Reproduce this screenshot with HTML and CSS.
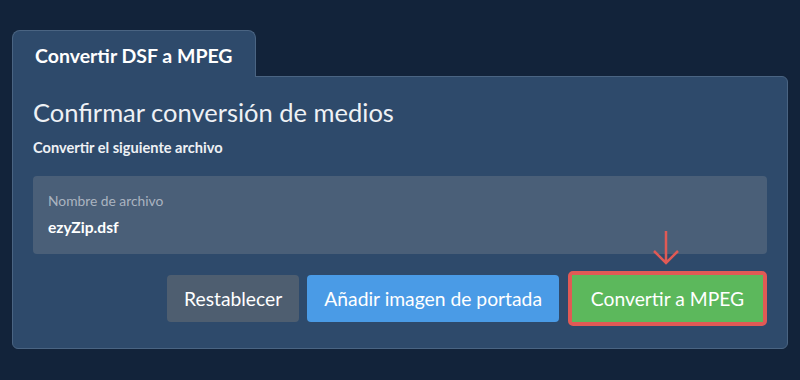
FILE: index.html
```html
<!DOCTYPE html>
<html>
<head>
    <meta charset="UTF-8">
    <title>Convertir DSF a MPEG</title>
    <link rel="stylesheet" href="styles.css">
</head>
<body>
    <div class="wrap">
        <div class="tabs">
            <div class="tab">Convertir DSF a MPEG</div>
        </div>

        <div class="panel">
            <h2>Confirmar conversión de medios</h2>
            <div class="subtitle">Convertir el siguiente archivo</div>

            <div class="file-box">
                <div class="file-label">Nombre de archivo</div>
                <div class="file-name">ezyZip.dsf</div>
            </div>

            <div class="actions">
                <button class="btn btn-reset">Restablecer</button>
                <button class="btn btn-cover">Añadir imagen de portada</button>
                <div class="highlight">
                    <svg class="arrow" viewBox="0 0 34 36" fill="none" xmlns="http://www.w3.org/2000/svg">
                        <path d="M17 1V33M5 21L17 33L29 21" stroke="#e05a55" stroke-width="2.5"/>
                    </svg>
                    <button class="btn btn-convert">Convertir a MPEG</button>
                </div>
            </div>
        </div>
    </div>
</body>
</html>
```

FILE: styles.css
```css
:root {
    --page: #12233a;
    --panel: #2e4a6b;
    --border: #4a6482;
    --field: #4a5f78;
    --text: #eef1f5;
    --muted: #aab4c0;
    --grey: #4e5e70;
    --blue: #4a9be6;
    --green: #5cb85c;
    --red: #e05a55;
}

body {
    margin: 0;
    background: var(--page);
    font-family: Lato, 'Open Sans', sans-serif;
    color: var(--text);
    width: 800px;
    height: 380px;
    overflow: hidden;
}

.wrap {
    padding: 30px 12px 0 12px;
}

.tabs {
    display: flex;
}

.tab {
    background: var(--panel);
    border: 1px solid var(--border);
    border-bottom: none;
    border-radius: 8px 8px 0 0;
    padding: 0 22px;
    width: 198px;
    height: 46px;
    line-height: 50px;
    font-size: 19.5px;
    font-weight: 700;
    color: #ffffff;
    position: relative;
    z-index: 1;
    margin-bottom: -1px;
}

.panel {
    background: var(--panel);
    border: 1px solid var(--border);
    border-radius: 0 6px 6px 6px;
    padding: 19px 20px 25px 20px;
    height: 227px;
}

h2 {
    margin: 0;
    font-size: 25.5px;
    font-weight: 400;
    line-height: 32px;
    color: var(--text);
}

.subtitle {
    margin-top: 11px;
    font-size: 14.6px;
    font-weight: 700;
    line-height: 18px;
}

.file-box {
    margin-top: 19px;
    background: var(--field);
    border-radius: 4px;
    height: 78px;
    padding: 0 15px;
    box-sizing: border-box;
    padding-top: 17px;
}

.file-label {
    font-size: 13.8px;
    color: var(--muted);
    line-height: 16px;
}

.file-name {
    margin-top: 8px;
    font-size: 15.6px;
    font-weight: 700;
    color: #ffffff;
    line-height: 20px;
}

.actions {
    display: flex;
    justify-content: flex-end;
    align-items: center;
    gap: 8px;
    margin-top: 17px;
}

.btn {
    border: none;
    border-radius: 4px;
    font-family: Lato, 'Open Sans', sans-serif;
    font-size: 19.3px;
    color: #ffffff;
    height: 47px;
    padding: 0 17px;
    cursor: pointer;
}

.btn-reset {
    background: var(--grey);
}

.btn-cover {
    background: var(--blue);
}

.highlight {
    position: relative;
    border: 4px solid var(--red);
    border-radius: 5px;
    margin-left: 1px;
}

.btn-convert {
    display: block;
    background: var(--green);
    border-radius: 0;
    width: 191px;
}

.arrow {
    position: absolute;
    left: 77px;
    top: -45px;
    width: 34px;
    height: 36px;
}
```
